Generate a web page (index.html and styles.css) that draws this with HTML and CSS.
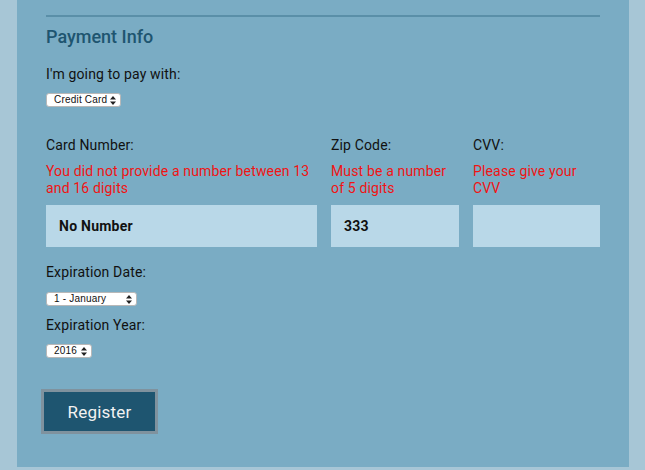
FILE: index.html
```html
<!DOCTYPE html>
<html>
<head>
<meta charset="utf-8">
<link rel="stylesheet" href="styles.css">
</head>
<body>
<div class="panel">
  <div class="rule"></div>
  <h2 class="title">Payment Info</h2>
  <div class="label pay-label">I'm going to pay with:</div>
  <select class="mini-select pay-select"><option>Credit Card</option></select>

  <div class="card-grid">
    <div class="field field-wide">
      <div class="label">Card Number:</div>
      <div class="error">You did not provide a number between 13 and 16 digits</div>
      <input class="text-input" type="text" value="No Number">
    </div>
    <div class="field">
      <div class="label">Zip Code:</div>
      <div class="error">Must be a number of 5 digits</div>
      <input class="text-input" type="text" value="333">
    </div>
    <div class="field">
      <div class="label">CVV:</div>
      <div class="error">Please give your CVV</div>
      <input class="text-input" type="text" value="">
    </div>
  </div>

  <div class="label exp-label">Expiration Date:</div>
  <select class="mini-select month-select"><option>1 - January</option></select>
  <div class="label year-label">Expiration Year:</div>
  <select class="mini-select year-select"><option>2016</option></select>

  <div class="actions">
    <button class="register" type="button">Register</button>
  </div>
</div>
</body>
</html>
```

FILE: styles.css
```css
html, body {
  margin: 0;
  padding: 0;
}
body {
  background: #a7c6d6;
  font-family: Roboto, "Noto Sans", sans-serif;
  height: 470px;
  overflow: hidden;
}
.panel {
  margin: 0 16px 0 17px;
  background: #7aacc4;
  padding: 15px 29px 0 29px;
  height: 452px;
}
.rule {
  height: 2px;
  background: #5a8fa8;
}
.title {
  margin: 9px 0 0 0;
  font-size: 18px;
  line-height: 22px;
  font-weight: 500;
  color: #1e5570;
}
.label {
  font-size: 14px;
  line-height: 17px;
  letter-spacing: 0.15px;
  color: #111;
}
.pay-label {
  margin-top: 18px;
}
.mini-select {
  display: block;
  -webkit-appearance: none;
  appearance: none;
  font-family: "Liberation Sans", Arial, sans-serif;
  font-size: 10px;
  letter-spacing: 0.2px;
  line-height: 12px;
  height: 14px;
  padding: 0 10px 0 7px;
  border: 1px solid #b8b8b8;
  border-radius: 3px;
  background-color: #fff;
  background-image: url("data:image/svg+xml;utf8,<svg xmlns='http://www.w3.org/2000/svg' width='6' height='9' viewBox='0 0 6 9'><path d='M0 3.5 L3 0 L6 3.5 Z M0 5.5 L3 9 L6 5.5 Z' fill='%23222'/></svg>");
  background-repeat: no-repeat;
  background-position: right 4px center;
  color: #111;
  box-sizing: border-box;
  overflow: visible;
}
.pay-select {
  margin-top: 10px;
  width: 75px;
}
.card-grid {
  margin-top: 30px;
  display: grid;
  grid-template-columns: 128px 129px 128px 127px;
  column-gap: 14px;
}
.field-wide {
  grid-column: span 2;
}
.error {
  margin-top: 9px;
  font-size: 14px;
  line-height: 17px;
  letter-spacing: 0.15px;
  color: #f01414;
  height: 34px;
}
.text-input {
  display: block;
  margin-top: 8px;
  width: 100%;
  height: 42px;
  box-sizing: border-box;
  border: none;
  outline: none;
  background: #b9d8e8;
  padding: 0 13px;
  font-family: Roboto, "Noto Sans", sans-serif;
  font-size: 14px;
  letter-spacing: 0.25px;
  font-weight: 700;
  color: #111;
}
.exp-label {
  margin-top: 17px;
}
.month-select {
  margin-top: 11px;
  width: 91px;
}
.year-label {
  margin-top: 11px;
}
.year-select {
  margin-top: 10px;
  width: 46px;
}
.actions {
  margin-top: 31px;
  margin-left: -5px;
}
.register {
  width: 117px;
  height: 45px;
  background: #1e5570;
  border: 3px solid #7f929e;
  color: #f2f2f2;
  font-family: Roboto, "Noto Sans", sans-serif;
  font-size: 17px;
  letter-spacing: 0.2px;
  padding: 0;
}
```
